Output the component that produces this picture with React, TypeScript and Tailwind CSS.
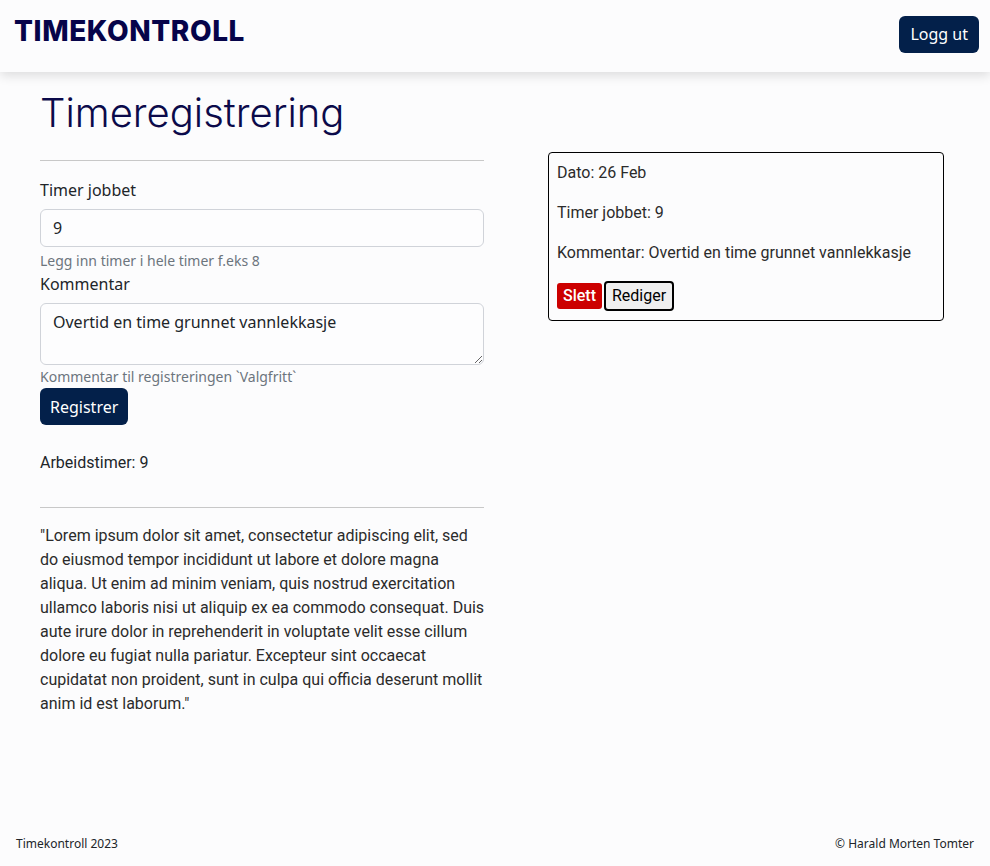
export default function App() {
  return (
    <div className="min-h-[866px] flex flex-col bg-[#fcfcfd] text-[#212529] font-['Noto_Sans',sans-serif]">
      {/* Header */}
      <header className="h-[72px] flex items-center justify-between pl-[14px] pr-[11px] bg-[#fcfcfd] shadow-[0_4px_10px_rgba(0,0,0,0.12)]">
        <h1 className="font-['Inter',sans-serif] font-extrabold text-[28px] tracking-[0.6px] text-[#06044a] -mt-[11px]">
          TIMEKONTROLL
        </h1>
        <button className="h-[37px] px-[11px] rounded-[6px] bg-[#03204a] text-white text-[16px] -mt-[4px]">
          Logg ut
        </button>
      </header>

      <main className="flex-1 flex pl-[40px] gap-[64px]">
        {/* Left column */}
        <div className="w-[444px]">
          <h2 className="font-['Inter',sans-serif] font-light text-[40px] leading-[48px] text-[#0b0a4a] mt-[17px]">
            Timeregistrering
          </h2>
          <hr className="mt-[23px] border-t border-[#c8c8c8]" />

          <label className="block mt-[17px] text-[16px] leading-[24px]">Timer jobbet</label>
          <input
            className="mt-[7px] w-full h-[38px] px-[12px] border border-[#d0d3d9] rounded-[6px] bg-[#fdfdfe] text-[16px]"
            defaultValue="9"
          />
          <p className="mt-[3px] text-[14px] leading-[21px] text-[#6c757d]">Legg inn timer i hele timer f.eks 8</p>
          <label className="block mt-[1px] text-[16px] leading-[24px]">Kommentar</label>
          <textarea
            className="block mt-[7px] w-full h-[62px] px-[12px] py-[6px] border border-[#d0d3d9] rounded-[6px] bg-[#fdfdfe] text-[16px] leading-[24px]"
            defaultValue="Overtid en time grunnet vannlekkasje"
          />
          <p className="mt-[1px] text-[14px] leading-[21px] text-[#6c757d]">Kommentar til registreringen `Valgfritt`</p>
          <button className="mt-[1px] h-[37px] px-[10px] rounded-[6px] bg-[#03204a] text-white text-[16px]">
            Registrer
          </button>

          <p className="mt-[26px] font-['Roboto',sans-serif] text-[16px] leading-[24px]">Arbeidstimer: 9</p>
          <hr className="mt-[32px] border-t border-[#c8c8c8]" />
          <p className="mt-[16px] w-[446px] font-['Roboto',sans-serif] text-[16px] leading-[24px] text-[#2b2b2b]">
            "Lorem ipsum dolor sit amet, consectetur adipiscing elit, sed do eiusmod tempor incididunt ut labore et
            dolore magna aliqua. Ut enim ad minim veniam, quis nostrud exercitation ullamco laboris nisi ut aliquip ex
            ea commodo consequat. Duis aute irure dolor in reprehenderit in voluptate velit esse cillum dolore eu
            fugiat nulla pariatur. Excepteur sint occaecat cupidatat non proident, sunt in culpa qui officia deserunt
            mollit anim id est laborum."
          </p>
        </div>

        {/* Right column */}
        <div className="w-[396px] pt-[80px]">
          <div className="border border-black rounded-[4px] px-[8px] pt-[8px] pb-[9px] font-['Roboto',sans-serif] text-[16px] leading-[24px] text-[#2b2b2b]">
            <p>Dato: 26 Feb</p>
            <p className="mt-[16px]">Timer jobbet: 9</p>
            <p className="mt-[16px]">Kommentar: Overtid en time grunnet vannlekkasje</p>
            <div className="mt-[16px] flex gap-[2px] items-center">
              <button className="h-[26px] px-[6px] rounded-[3px] bg-[#cc0000] text-white text-[16px] leading-[20px] font-medium">
                Slett
              </button>
              <button className="h-[30px] px-[6px] rounded-[4px] bg-[#efefef] border-2 border-black text-black text-[16px] leading-[20px]">
                Rediger
              </button>
            </div>
          </div>
        </div>
      </main>

      <footer className="h-[40px] flex items-center justify-between px-[16px] pb-[4px] text-[12px] text-[#212529]">
        <span>Timekontroll 2023</span>
        <span>© Harald Morten Tomter</span>
      </footer>
    </div>
  );
}
